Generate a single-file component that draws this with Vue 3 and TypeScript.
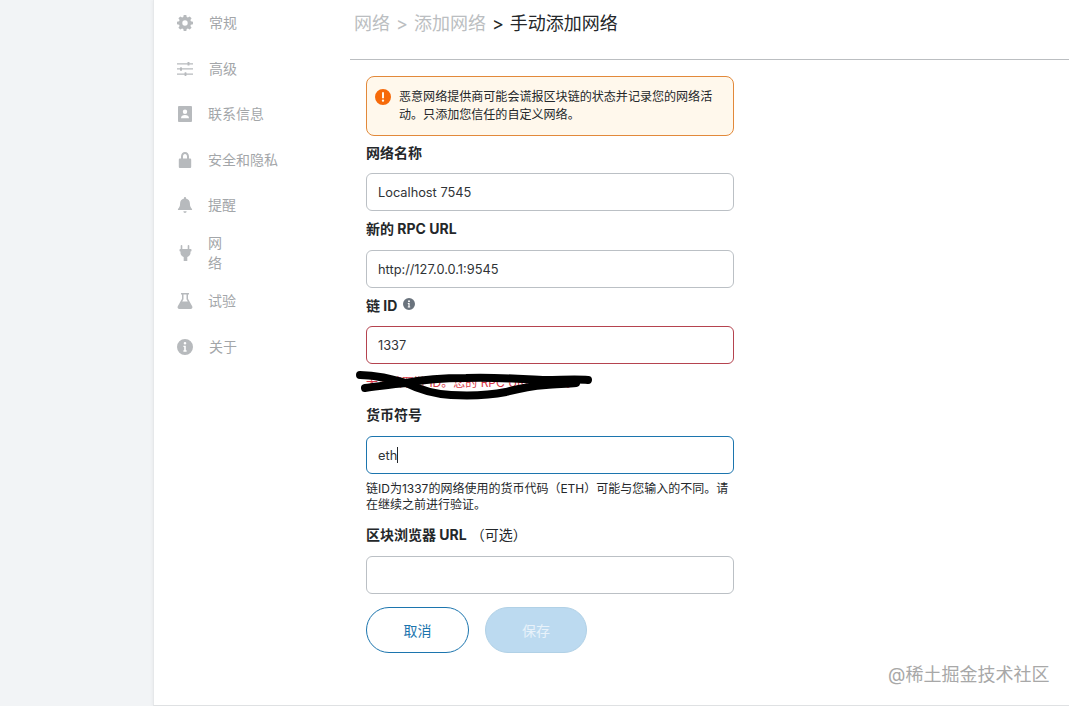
<script setup lang="ts">
const menu = [
  { key: 'gear', label: '常规', shift: 1 },
  { key: 'sliders', label: '高级', shift: 1 },
  { key: 'contact', label: '联系信息', shift: 0 },
  { key: 'lock', label: '安全和隐私', shift: 0 },
  { key: 'bell', label: '提醒', shift: 0 },
  { key: 'plug', label: '网络', shift: 0 },
  { key: 'flask', label: '试验', shift: 0 },
  { key: 'info', label: '关于', shift: 1 },
]
</script>

<template>
  <div class="page">
    <aside class="gutter"></aside>
    <div class="panel">
      <nav class="nav">
        <div v-for="m in menu" :key="m.key" class="item" :class="[m.key, { nudge: m.shift }]">
          <svg class="ico" viewBox="0 0 16 16" aria-hidden="true">
            <path v-if="m.key === 'gear'" fill-rule="evenodd" d="M6.7 0h2.6l.4 2.1 1.2.5L12.700 1.400l1.900 1.900-1.200 1.800.5 1.200 2.100.4v2.600l-2.100.4-.5 1.200 1.200 1.800-1.900 1.900-1.800-1.200-1.200.5-.4 2.100H6.700l-.4-2.100-1.200-.5-1.800 1.200-1.900-1.900 1.200-1.800-.5-1.200L0 9.300V6.700l2.100-.4.5-1.200-1.200-1.800 1.900-1.900 1.800 1.200 1.200-.5zM8 5.300a2.700 2.700 0 1 0 0 5.400 2.700 2.700 0 0 0 0-5.400z" />
            <g v-else-if="m.key === 'sliders'">
              <path d="M0 2.200h16v1.300H0zM0 7.300h16v1.300H0zM0 12.400h16v1.300H0z" />
              <rect x="10.500" y="1" width="2" height="3.600" rx=".6" />
              <rect x="3" y="6.200" width="2" height="3.600" rx=".6" />
              <rect x="7.500" y="11.300" width="2" height="3.600" rx=".6" />
            </g>
            <path v-else-if="m.key === 'contact'" fill-rule="evenodd" d="M2.300 0h11.400c.9 0 1.300.5 1.300 1.300v13.400c0 .8-.4 1.300-1.300 1.300H2.300C1.400 16 1 15.500 1 14.700V1.300C1 .5 1.400 0 2.300 0zM8 3.600a2.200 2.200 0 1 0 0 4.400 2.200 2.200 0 0 0 0-4.400zM4 12.200h8c0-2-1.600-3.200-4-3.200s-4 1.200-4 3.200z" />
            <path v-else-if="m.key === 'lock'" fill-rule="evenodd" d="M4 6.500V4.400C4 1.900 5.700 0 8 0s4 1.900 4 4.400v2.100h.9c.8 0 1.300.5 1.300 1.300v6.900c0 .8-.5 1.300-1.300 1.300H3.100c-.8 0-1.300-.5-1.300-1.300V7.800c0-.8.500-1.300 1.300-1.300zm2 0h4V4.400C10 3 9.200 2 8 2S6 3 6 4.400z" />
            <path v-else-if="m.key === 'bell'" d="M8 0c.6 0 1 .4 1 1v.6c2.500.5 3.900 2.500 3.900 5 0 3 .9 4 2.100 5.400.3.400 0 1-.5 1h-13c-.5 0-.8-.6-.5-1C2.200 10.600 3.100 9.600 3.100 6.600c0-2.500 1.400-4.500 3.900-5V1c0-.6.400-1 1-1zM6.400 14.300h3.200C9.600 15.300 8.900 16 8 16s-1.600-.7-1.600-1.700z" />
            <path v-else-if="m.key === 'plug'" d="M4.500 0c.5 0 .8.300.8.8V4h5.400V.8c0-.5.300-.8.800-.8s.8.300.8.8V4h1.500c.4 0 .7.300.7.700v1c0 .4-.3.700-.7.700h-.3v1.400c0 2-1.400 3.700-3.200 4.100V16H6.700v-4.100C4.900 11.500 3.500 9.800 3.500 7.800V6.400h-.3c-.4 0-.7-.3-.7-.7v-1c0-.4.300-.7.700-.7h.5V.8c0-.5.300-.8.800-.8z" />
            <path v-else-if="m.key === 'flask'" fill-rule="evenodd" d="M4 0h8v1.400h-1v4.400l4.200 7.500c.7 1.300-.1 2.700-1.500 2.700H2.300C.9 16 .1 14.600.8 13.300L5 5.800V1.400H4zm2.500 1.400v4.800L5.200 8.600h5.600L9.500 6.200V1.400z" />
            <path v-else fill-rule="evenodd" d="M8 0a8 8 0 1 1 0 16A8 8 0 0 1 8 0zm0 3a1.300 1.300 0 1 0 0 2.600A1.300 1.300 0 0 0 8 3zM6.400 6.700v1.400h.8v3.200h-.8v1.400h3.200v-1.400h-.8V6.700z" />
          </svg>
          <span class="text">{{ m.label }}</span>
        </div>
      </nav>

      <main class="main">
        <header class="crumbs">
          <span class="dim">网络</span>
          <span class="dim sep">&gt;</span>
          <span class="dim">添加网络</span>
          <span class="sep">&gt;</span>
          <span>手动添加网络</span>
        </header>

        <form class="form" @submit.prevent>
          <div class="warn">
            <svg class="warn-ico" viewBox="0 0 16 16" aria-hidden="true">
              <path fill-rule="evenodd" d="M8 0a8 8 0 1 1 0 16A8 8 0 0 1 8 0zM7 3.200v6h2v-6zm1 7.200a1.200 1.200 0 1 0 0 2.400 1.200 1.200 0 0 0 0-2.400z" />
            </svg>
            <p>恶意网络提供商可能会谎报区块链的状态并记录您的网络活动。只添加您信任的自定义网络。</p>
          </div>

          <label class="lbl first">网络名称</label>
          <input class="inp" value="Localhost 7545" />

          <label class="lbl">新的 RPC URL</label>
          <input class="inp" value="http://127.0.0.1:9545" />

          <label class="lbl chain">
            链 ID
            <svg class="hint" viewBox="0 0 16 16" aria-hidden="true">
              <path fill-rule="evenodd" d="M8 0a8 8 0 1 1 0 16A8 8 0 0 1 8 0zm0 3a1.300 1.300 0 1 0 0 2.600A1.300 1.300 0 0 0 8 3zM6.400 6.700v1.400h.8v3.200h-.8v1.400h3.200v-1.400h-.8V6.700z" />
            </svg>
          </label>
          <input class="inp bad" value="1337" />
          <div class="err">
            <span>无法获取链 ID。您的 RPC URL 正确吗？</span>
            <svg class="smear" viewBox="0 0 240 34" aria-hidden="true">
              <path d="M4 6 C20 6 35 10 50 14 C65 11 85 9 110 9 C140 8 165 10 190 11 C205 11 220 10 232 11" />
              <path d="M9 19 C25 17 38 15 50 14 C62 20 78 25 95 26 C115 27 135 26 150 23 C165 19 175 17 190 16 C200 15 212 15 220 14" />
            </svg>
          </div>

          <label class="lbl sym">货币符号</label>
          <div class="focus-wrap">
            <input class="inp focus" value="eth" />
            <i class="caret"></i>
          </div>
          <p class="help">链ID为1337的网络使用的货币代码（ETH）可能与您输入的不同。请在继续之前进行验证。</p>

          <label class="lbl exp">区块浏览器 URL<span class="opt">（可选）</span></label>
          <input class="inp" value="" />

          <div class="btns">
            <button type="button" class="btn ghost">取消</button>
            <button type="button" class="btn save">保存</button>
          </div>
        </form>
      </main>
    </div>
    <div class="mark">@稀土掘金技术社区</div>
  </div>
</template>

<style scoped>
.page {
  position: relative;
  display: flex;
  width: 1069px;
  height: 706px;
  overflow: hidden;
  background: #fff;
  font-family: Inter, "Noto Sans CJK SC", sans-serif;
  color: #24272a;
}
.gutter {
  width: 153px;
  flex: none;
  background: #f2f4f6;
}
.panel {
  flex: 1;
  display: flex;
  background: #fff;
  border-left: 1px solid #e6e8ea;
  border-bottom: 1px solid #dfe1e3;
  box-shadow: -1px 0 3px rgba(0, 0, 0, 0.04);
}
.nav {
  box-sizing: border-box;
  width: 196px;
  flex: none;
  display: flex;
  flex-direction: column;
  padding: 0.500px 0 0 23px;
}
.item {
  display: flex;
  align-items: center;
  height: 45.500px;
  color: #b3b6b9;
}
.item.plug {
  height: 50px;
}
.item.flask {
  height: 46px;
}
.ico {
  width: 16px;
  height: 16px;
  flex: none;
  fill: #b7babd;
}
.text {
  margin-left: 15px;
  font-size: 14px;
  line-height: 20px;
  color: #a3a6a9;
}
.item.nudge .text {
  margin-left: 16px;
}
.item.plug .text {
  width: 15px;
  margin-left: 15px;
}
.main {
  flex: 1;
  min-width: 0;
}
.crumbs {
  box-sizing: border-box;
  height: 60px;
  padding: 10px 0 0 4px;
  border-bottom: 1px solid #bbbec1;
  display: flex;
  align-items: flex-start;
  font-size: 18px;
  line-height: 28px;
  color: #24272a;
  white-space: nowrap;
}
.dim {
  color: #bbbec1;
}
.sep {
  margin: 0 6px;
}
.form {
  box-sizing: border-box;
  width: 368px;
  margin-left: 16px;
  padding-top: 16px;
  display: flex;
  flex-direction: column;
}
.warn {
  box-sizing: border-box;
  height: 60px;
  display: flex;
  padding: 11px 12px 0 8px;
  background: #fff8ec;
  border: 1px solid #e2893a;
  border-radius: 8px;
}
.warn-ico {
  width: 16px;
  height: 16px;
  flex: none;
  margin-top: 1px;
  fill: #f66a0a;
}
.warn p {
  margin: 0 0 0 8px;
  font-size: 12.050px;
  line-height: 17.500px;
  color: #24272a;
}
.lbl {
  display: flex;
  align-items: center;
  height: 20px;
  margin: 7px 0 12px;
  font-size: 14px;
  font-weight: 700;
  color: #24272a;
}
.lbl.first {
  margin-top: 6px;
  margin-bottom: 11px;
}
.lbl.chain {
  margin-top: 7px;
  margin-bottom: 11px;
  gap: 6px;
}
.lbl.sym {
  margin-top: 5px;
  margin-bottom: 12px;
}
.lbl.exp {
  margin-top: 11px;
  margin-bottom: 12px;
}
.opt {
  font-weight: 400;
  margin-left: 4px;
}
.hint {
  width: 12px;
  height: 12px;
  fill: #6a737d;
  margin-top: -2px;
}
.inp {
  box-sizing: border-box;
  display: block;
  width: 100%;
  height: 38px;
  padding: 0 11px;
  font: 400 12.800px Inter, "Noto Sans CJK SC", sans-serif;
  color: #2f3336;
  background: #fff;
  border: 1px solid #bbc0c5;
  border-radius: 6px;
  outline: none;
}
.inp.bad {
  border-color: #b5434f;
}
.inp.focus {
  border-color: #1c75ae;
}
.focus-wrap {
  position: relative;
}
.caret {
  position: absolute;
  left: 31px;
  top: 11px;
  width: 1px;
  height: 16px;
  background: #24272a;
}
.err {
  position: relative;
  height: 35px;
  padding-top: 10px;
  box-sizing: border-box;
  font-size: 12px;
  line-height: 18px;
  color: #d73a49;
  white-space: nowrap;
}
.smear {
  position: absolute;
  left: -10px;
  top: 5px;
  width: 240px;
  height: 34px;
  overflow: visible;
  fill: none;
  stroke: #000;
  stroke-width: 8;
  stroke-linecap: round;
  stroke-linejoin: round;
}
.help {
  margin: 7px 0 0;
  font-size: 12px;
  line-height: 16px;
  color: #24272a;
}
.btns {
  display: flex;
  gap: 16px;
  margin-top: 13px;
}
.btn {
  box-sizing: border-box;
  height: 46px;
  border-radius: 23px;
  font: 400 14px Inter, "Noto Sans CJK SC", sans-serif;
  background: #fff;
  padding: 0;
}
.ghost {
  width: 103px;
  border: 1px solid #1c75ae;
  color: #1c75ae;
}
.save {
  width: 102px;
  border: 1px solid #b1d1e6;
  background: #bcdaf0;
  color: #e8f2fa;
}
.mark {
  position: absolute;
  left: 888px;
  top: 663px;
  font-size: 18px;
  line-height: 24px;
  color: #a8a8a8;
  white-space: nowrap;
}
</style>
